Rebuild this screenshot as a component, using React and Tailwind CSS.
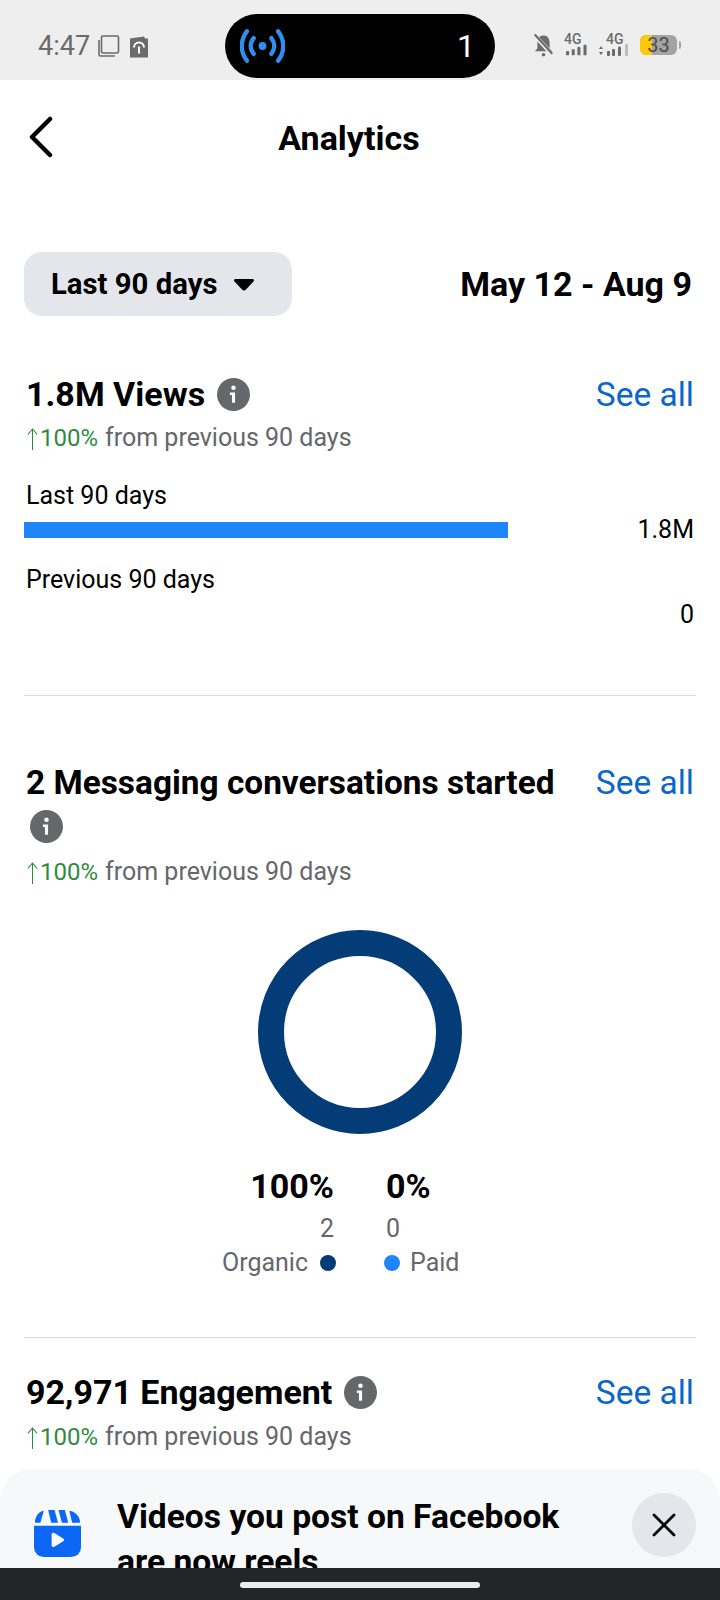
import React from 'react';

const InfoIcon = ({ className }) => (
  <svg viewBox="0 0 32 32" className={className}>
    <circle cx="16" cy="16" r="16" fill="#65676b" />
    <circle cx="16" cy="9.5" r="2.2" fill="#fff" />
    <path d="M12.5 14h5v10h-3v-7.6h-2z" fill="#fff" />
  </svg>
);

const StatHeader = ({ title }) => (
  <div className="flex justify-between items-start h-[38px]">
    <div className="pl-[2px] text-[34px] leading-[38px] font-bold text-black">{title}</div>
    <div className="text-[33.500px] leading-[38px] text-[#0a66c8] pr-[2px] pt-[1px] shrink-0">See all</div>
  </div>
);

const Change = () => (
  <div className="flex items-center text-[25px] leading-[30px] text-[#65676b] pl-[3px]">
    <svg viewBox="0 0 12 24" className="w-[11px] h-[24px] mr-[2px] mt-[2px]" fill="none" stroke="#2e8b3d" strokeWidth="1.100">
      <path d="M6 24V1M1 7l5-6 5 6" />
    </svg>
    <span className="text-[24px] text-[#2e8b3d]">100%</span>
    <span className="ml-[7px]">from previous 90 days</span>
  </div>
);

const StatusBar = () => (
  <div className="h-[80px] bg-[#eeeeee] flex items-center relative">
    <div className="flex items-center w-[225px] pl-[38px] pt-[12px]">
      <span className="text-[27px] text-[#6b6b6b]">4:47</span>
      <svg viewBox="0 0 22 22" className="w-[22px] h-[22px] ml-[8px]" fill="none" stroke="#6b6b6b" strokeWidth="1.6">
        <rect x="3.5" y="1" width="17" height="17" rx="1.5" />
        <path d="M1 5v14.5a1.5 1.5 0 0 0 1.5 1.500H17" />
      </svg>
      <svg viewBox="0 0 20 22" className="w-[20px] h-[23px] ml-[9px]">
        <path d="M1 3l14-2 1 2h3v19H1z" fill="#6b6b6b" />
        <path d="M5 12a5 5 0 0 1 10 0" fill="none" stroke="#fff" strokeWidth="2" />
        <rect x="9" y="11" width="2" height="7" fill="#fff" />
      </svg>
    </div>
    <div className="w-[270px] h-[64px] mt-[12px] bg-black rounded-full flex items-center justify-between pl-[15px] pr-[20px]">
      <svg viewBox="0 0 46 34" className="w-[45px] h-[34px]" fill="none" stroke="#2f8fef" strokeWidth="4.500" strokeLinecap="round">
        <circle cx="23" cy="17" r="4" fill="#2f8fef" stroke="none" />
        <path d="M14 9c-4 5-4 11 0 16" />
        <path d="M32 9c4 5 4 11 0 16" />
        <path d="M7 2c-7 9-7 21 0 30" />
        <path d="M39 2c7 9 7 21 0 30" />
      </svg>
      <span className="text-[32px] text-white">1</span>
    </div>
    <div className="flex items-center ml-[38px] pt-[10px]">
      <svg viewBox="0 0 24 26" className="w-[21px] h-[24px]">
        <path d="M12 2c5 0 7 4 7 9v6l3 3H2l3-3v-6c0-5 2-9 7-9z" fill="#6b6b6b" />
        <circle cx="12" cy="24" r="2" fill="#6b6b6b" />
        <path d="M2 2l20 22" stroke="#eeeeee" strokeWidth="5" />
        <path d="M2 1l20 22" stroke="#6b6b6b" strokeWidth="2.5" />
      </svg>
      <div className="relative w-[24px] h-[24px] ml-[9px]">
        <span className="absolute -top-[1px] left-[1px] text-[14px] leading-[14px] font-medium text-[#6b6b6b]">4G</span>
        <svg viewBox="0 0 24 12" className="absolute bottom-0 left-[3px] w-[21px] h-[14px]" fill="#6b6b6b">
          <rect x="0" y="7" width="3.500" height="5" rx="1" />
          <rect x="6.500" y="5" width="3.500" height="7" rx="1" />
          <rect x="13" y="2.500" width="3.500" height="9.500" rx="1" />
          <rect x="20" y="0" width="3.500" height="12" rx="1" />
        </svg>
      </div>
      <div className="relative w-[30px] h-[24px] ml-[12px]">
        <span className="absolute -top-[1px] left-[7px] text-[14px] leading-[14px] font-medium text-[#6b6b6b]">4G</span>
        <svg viewBox="0 0 30 12" className="absolute bottom-0 left-0 w-[30px] h-[14px]" fill="#6b6b6b">
          <path d="M0 5l2-3 2 3zM0 8l2 3 2-3z" />
          <rect x="8" y="7" width="3" height="5" rx="1" />
          <rect x="13" y="5" width="3" height="7" rx="1" />
          <rect x="19" y="2.500" width="3" height="9.500" rx="1" />
          <rect x="26" y="0" width="3" height="12" rx="1" fill="#bdbdbd" />
        </svg>
      </div>
      <div className="relative w-[37px] h-[20px] ml-[11px] rounded-[6px] bg-[#a3a3a3] flex items-center justify-center">
        <div className="absolute left-0 top-0 bottom-0 w-[12px] rounded-l-[6px] bg-[#fdc90a]" />
        <span className="relative text-[20px] leading-[20px] text-[#4d4d4d]">33</span>
      </div>
      <div className="w-[2px] h-[8px] ml-[2px] bg-[#a3a3a3] rounded-r" />
    </div>
  </div>
);

export default function App() {
  return (
    <div className="relative w-[720px] h-[1600px] overflow-hidden bg-white font-['Roboto',sans-serif]">
      <StatusBar />

      <div className="relative h-[116px] flex items-center justify-center">
        <svg viewBox="0 0 24 42" className="absolute left-[29px] top-[36px] w-[24px] h-[42px]" fill="none" stroke="#000" strokeWidth="4.500" strokeLinecap="round" strokeLinejoin="round">
          <path d="M21 3L3 21l18 18" />
        </svg>
        <h1 className="text-[34px] font-bold text-black mr-[22px]">Analytics</h1>
      </div>

      <div className="px-[24px]">
        <div className="mt-[56px] flex items-center justify-between">
          <div className="w-[268px] h-[64px] bg-[#e4e6eb] rounded-[18px] flex items-center pl-[27px] pt-[1px]">
            <span className="text-[29.300px] font-bold text-black">Last 90 days</span>
            <svg viewBox="0 0 20 12" className="w-[20px] h-[12px] ml-[17px]" fill="#000">
              <path d="M1.500 0h17c1.300 0 2 1.500 1 2.500l-7.500 8a2.800 2.800 0 0 1-4 0L.5 2.500C-.5 1.500.2 0 1.500 0z" />
            </svg>
          </div>
          <div className="text-[34px] font-bold text-black pr-[4px]">May 12 - Aug 9</div>
        </div>

        <div className="mt-[59px]">
          <StatHeader
            title={
              <span className="flex items-center gap-[12px]">
                1.8M Views <InfoIcon className="w-[33px] h-[33px]" />
              </span>
            }
          />
          <div className="mt-[10px]"><Change /></div>
          <div className="mt-[28px] pl-[2px] text-[25px] leading-[30px] text-black">Last 90 days</div>
          <div className="flex justify-between items-center mt-[11px] h-[16px]">
            <div className="w-[484px] h-[16px] bg-[#1f85fb]" />
            <div className="text-[25px] leading-[30px] text-black pr-[2px]">1.8M</div>
          </div>
          <div className="mt-[27px] pl-[2px] text-[25px] leading-[30px] text-black">Previous 90 days</div>
          <div className="text-right text-[25px] leading-[30px] text-black pr-[2px] mt-[5px]">0</div>
          <div className="mt-[65px] h-[1px] bg-[#d9dadd]" />
        </div>

        <div className="mt-[67px]">
          <StatHeader title={<span className="text-[33.400px]">2 Messaging conversations started</span>} />
          <InfoIcon className="w-[33px] h-[33px] ml-[6px] mt-[9px]" />
          <div className="mt-[14px]"><Change /></div>

          <div className="flex justify-center mt-[43px]">
            <div className="w-[204px] h-[204px] rounded-full border-[26px] border-[#043c78]" />
          </div>

          <div className="grid grid-cols-[336px_1fr] mt-[33px]">
            <div className="flex flex-col items-end pr-[26px]">
              <div className="text-[34px] leading-[38px] font-bold text-black">100%</div>
              <div className="text-[25px] leading-[30px] text-[#65676b] mt-[9px]">2</div>
              <div className="flex items-center text-[25px] leading-[30px] text-[#65676b] mt-[4px] -mr-[2px]">
                Organic <span className="w-[16px] h-[16px] rounded-full bg-[#043c78] ml-[12px]" />
              </div>
            </div>
            <div className="flex flex-col items-start pl-[26px]">
              <div className="text-[34px] leading-[38px] font-bold text-black">0%</div>
              <div className="text-[25px] leading-[30px] text-[#65676b] mt-[9px]">0</div>
              <div className="flex items-center text-[25px] leading-[30px] text-[#65676b] mt-[4px] -ml-[2px]">
                <span className="w-[16px] h-[16px] rounded-full bg-[#1f85fb] mr-[10px]" /> Paid
              </div>
            </div>
          </div>
          <div className="mt-[59px] h-[1px] bg-[#d9dadd]" />
        </div>

        <div className="mt-[35px]">
          <StatHeader
            title={
              <span className="flex items-center gap-[12px]">
                92,971 Engagement <InfoIcon className="w-[33px] h-[33px]" />
              </span>
            }
          />
          <div className="mt-[11px]"><Change /></div>
        </div>
      </div>

      {/* bottom sheet sits over the page */}
      <div className="absolute left-0 right-0 top-[1469px] h-[100px] bg-[#f7f8fa] rounded-t-[32px] overflow-hidden flex items-start pl-[34px] pr-[24px]">
        <svg viewBox="0 0 48 48" className="w-[47px] h-[47px] mt-[41px] shrink-0">
          <path d="M1 13C1 7 4 2 10 .8L6.500 13z" fill="#0c67f5" />
          <path d="M14.500 0h6.500L24.500 13h-7z" fill="#0c67f5" />
          <path d="M25 0h6.500L35 13h-6.500z" fill="#0c67f5" />
          <path d="M36 .8C43 2 47 7 47 13h-8z" fill="#0c67f5" />
          <path d="M0 16h48v22a10 10 0 0 1-10 10H10A10 10 0 0 1 0 38z" fill="#0c67f5" />
          <path d="M18 25c0-1.500 1.500-2.300 2.800-1.500l9 5.500c1.200.7 1.200 2.300 0 3l-9 5.500c-1.300.8-2.800 0-2.800-1.500z" fill="#fff" />
        </svg>
        <div className="ml-[36px] mt-[25px] w-[470px] text-[33.600px] leading-[45px] font-bold text-black">
          Videos you post on Facebook are now reels
        </div>
        <div className="ml-auto mt-[24px] w-[64px] h-[64px] rounded-full bg-[#e4e6eb] flex items-center justify-center shrink-0">
          <svg viewBox="0 0 24 24" className="w-[24px] h-[24px]" fill="none" stroke="#000" strokeWidth="2.800" strokeLinecap="round">
            <path d="M2 2l20 20M22 2L2 22" />
          </svg>
        </div>
      </div>

      <div className="absolute left-0 right-0 bottom-0 h-[32px] bg-[#242526] flex justify-center pt-[14px]">
        <div className="w-[240px] h-[6px] rounded-full bg-[#ededed]" />
      </div>
    </div>
  );
}
